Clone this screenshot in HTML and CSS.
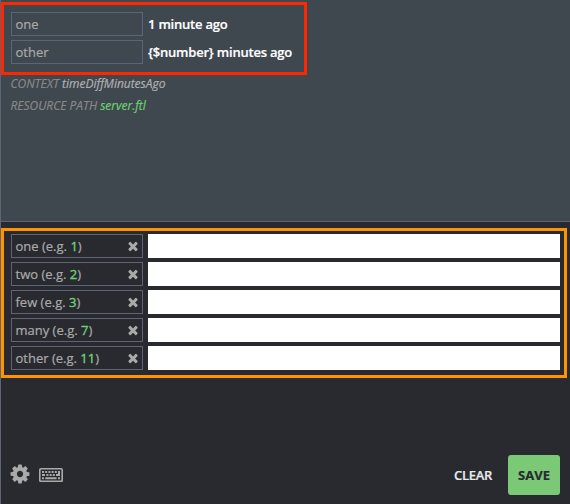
FILE: index.html
```html
<!DOCTYPE html>
<html lang="en">
<head>
<meta charset="utf-8">
<title>Translation editor</title>
<link rel="stylesheet" href="styles.css">
</head>
<body>
<svg class="defs" width="0" height="0">
  <symbol id="times" viewBox="0 0 1792 1792"><path d="M1490 1322q0 40-28 68l-136 136q-28 28-68 28t-68-28l-294-294-294 294q-28 28-68 28t-68-28l-136-136q-28-28-28-68t28-68l294-294-294-294q-28-28-28-68t28-68l136-136q28-28 68-28t68 28l294 294 294-294q28-28 68-28t68 28l136 136q28 28 28 68t-28 68l-294 294 294 294q28 28 28 68z"/></symbol>
</svg>
<main class="editor">
  <section class="source">
    <div class="originals">
      <div class="row"><span class="label">one</span><span class="string">1 minute ago</span></div>
      <div class="row"><span class="label">other</span><span class="string">{$number} minutes ago</span></div>
    </div>
    <p class="meta context">CONTEXT <span class="value">timeDiffMinutesAgo</span></p>
    <p class="meta path">RESOURCE PATH <a class="link">server.ftl</a></p>
  </section>
  <section class="target">
    <div class="translations">
      <div class="row"><span class="label"><span>one (e.g. <b>1</b>)</span><svg class="remove"><use href="#times"/></svg></span><span class="field"></span></div>
      <div class="row"><span class="label"><span>two (e.g. <b>2</b>)</span><svg class="remove"><use href="#times"/></svg></span><span class="field"></span></div>
      <div class="row"><span class="label"><span>few (e.g. <b>3</b>)</span><svg class="remove"><use href="#times"/></svg></span><span class="field"></span></div>
      <div class="row"><span class="label"><span>many (e.g. <b>7</b>)</span><svg class="remove"><use href="#times"/></svg></span><span class="field"></span></div>
      <div class="row"><span class="label"><span>other (e.g. <b>11</b>)</span><svg class="remove"><use href="#times"/></svg></span><span class="field"></span></div>
    </div>
    <footer class="toolbar">
      <svg class="cog" viewBox="0 0 1792 1792"><path d="M1152 896q0-106-75-181t-181-75-181 75-75 181 75 181 181 75 181-75 75-181zm512-109v222q0 12-8 23t-20 13l-185 28q-19 54-39 91 35 50 107 138 10 12 10 25t-9 23q-27 37-99 108t-94 71q-12 0-26-9l-138-108q-44 23-91 38-16 136-29 186-7 28-36 28h-222q-14 0-24.500-8.500t-11.500-21.500l-28-184q-49-16-90-37l-141 107q-10 9-25 9-14 0-25-11-126-114-165-168-7-10-7-23 0-12 8-23 15-21 51-66.500t54-70.500q-27-50-41-99l-183-27q-13-2-21-12.500t-8-23.500v-222q0-12 8-23t19-13l186-28q14-46 39-92-40-57-107-138-10-12-10-24 0-10 9-23 26-36 98.500-107.500t94.500-71.500q13 0 26 10l138 107q44-23 91-38 16-136 29-186 7-28 36-28h222q14 0 24.500 8.500t11.500 21.500l28 184q49 16 90 37l142-107q9-9 24-9 13 0 25 10 129 119 165 170 7 8 7 22 0 12-8 23-15 21-51 66.500t-54 70.500q26 50 41 98l183 28q13 2 21 12.500t8 23.500z"/></svg>
      <svg class="keyboard" viewBox="0 0 24 14">
        <rect x=".8" y=".8" width="22.400" height="12.600" rx="1.200" fill="none" stroke="#aaa" stroke-width="1.600"/>
        <path d="M3 3h2v2H3zM6.200 3h2v2h-2zM9.400 3h2v2h-2zM12.600 3h2v2h-2zM15.800 3h2v2h-2zM19 3h2v5h-4V6h2zM3 6h3v2H3zM7.400 6h2v2h-2zM10.600 6h2v2h-2zM13.800 6h2v2h-2zM3 9.200h2v2H3zM6.200 9.200h11.400v2H6.200zM19 9.200h2v2h-2z"/>
      </svg>
      <button class="clear">CLEAR</button>
      <button class="save">SAVE</button>
    </footer>
  </section>
</main>
</body>
</html>
```
FILE: styles.css
```css
* { box-sizing: border-box; }
body {
  margin: 0;
  background: #282a2f;
  color: #aaa;
  font: 13px/22px "Open Sans", sans-serif;
  -webkit-text-stroke: .2px;
}
.defs { display: block; }
.editor {
  display: flex;
  flex-direction: column;
  height: 504px;
  border-left: 1px solid #5e6475;
}
.source {
  height: 222px;
  padding-top: 2px;
  background: #3f474f;
  border-bottom: 1px solid #5e6475;
}
.originals {
  width: 306px;
  height: 73px;
  padding: 7px;
  border: 3px solid #ff2600;
}
.row { display: flex; gap: 5px; height: 24px; }
.row + .row { margin-top: 4px; }
.label {
  display: flex;
  justify-content: space-between;
  width: 132px;
  padding: 0 2px 0 3.500px;
  border: 1px solid #5e6475;
}
.label b { color: #6fd072; font-weight: 400; -webkit-text-stroke: .35px; }
.string {
  color: #fff;
  font-weight: 600;
  letter-spacing: -.21px;
  line-height: 24px;
  white-space: nowrap;
}
.meta {
  margin: 0 0 0 9.500px;
  color: #888;
  font-size: 12px;
  font-style: italic;
  letter-spacing: -.02px;
  line-height: 22px;
}
.context { margin-top: -2px; }
.value { color: #b0b0b0; }
.link { color: #6fd072; }
.target {
  display: flex;
  flex: 1;
  flex-direction: column;
  justify-content: space-between;
  padding-top: 6px;
}
.translations {
  width: 566px;
  height: 150px;
  padding: 3px 4px 0 7px;
  border: 3px solid #ff9300;
}
.remove { width: 14px; height: 14px; margin: 4px 0 0; fill: #aaa; }
.field { flex: 1; background: #fff; }
.toolbar {
  display: flex;
  align-items: center;
  height: 40px;
  margin: 0 10px 9px 8px;
}
.cog { width: 22px; height: 22px; margin-top: -2px; fill: #aaa; }
.keyboard { width: 24px; height: 14px; margin-left: 8px; fill: #aaa; }
button {
  height: 40px;
  padding: 0;
  border: 0;
  background: none;
  font: 600 13px "Open Sans", sans-serif;
}
.clear { width: 52px; margin: 0 9px 0 auto; color: #ebebeb; letter-spacing: -.25px; }
.save { width: 52px; border-radius: 3px; background: #7bc876; color: #272a2f; font-weight: 700; }
```
